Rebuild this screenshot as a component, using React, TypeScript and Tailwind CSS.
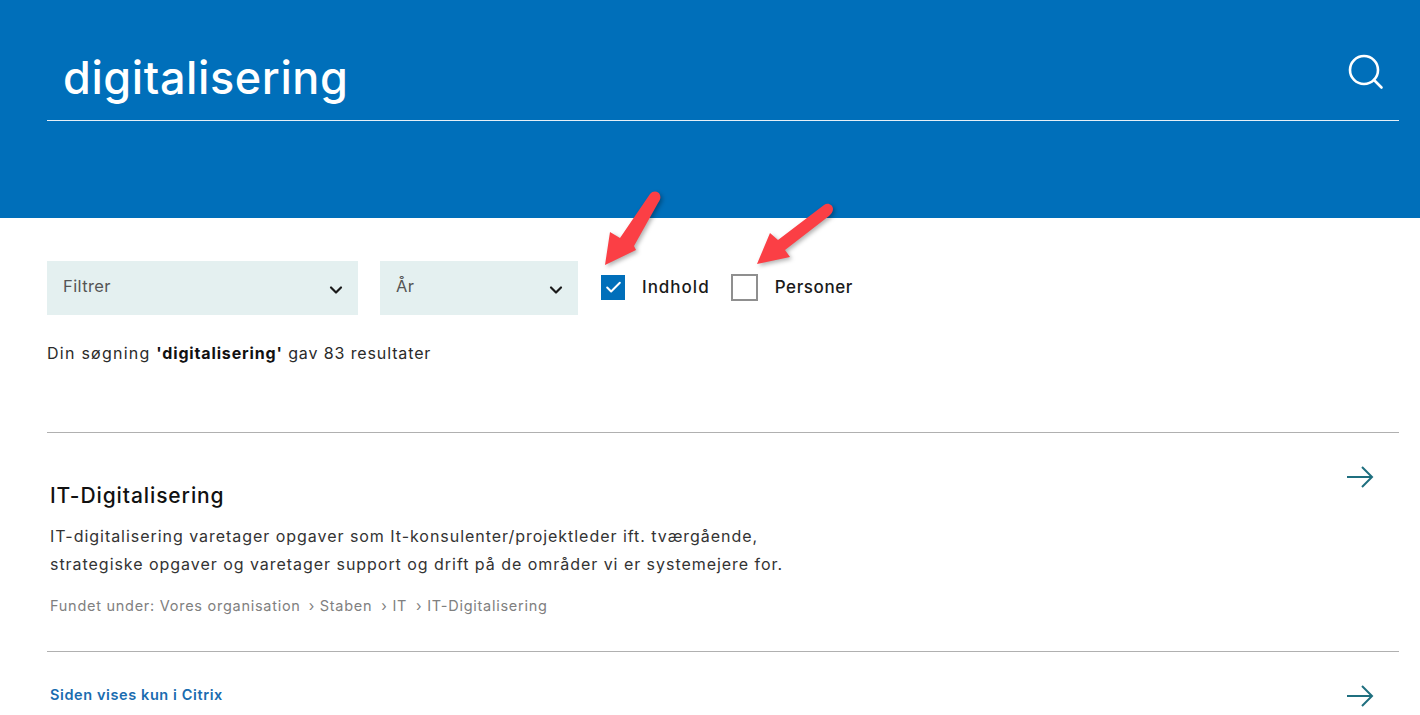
import { Check, ChevronDown } from "lucide-react";

const fontStack = "font-['Inter','Noto_Sans',sans-serif]";

function SearchIcon() {
  return (
    <svg width="38" height="38" viewBox="0 0 38 38" fill="none" stroke="#fff" strokeWidth="2.6" strokeLinecap="round">
      <circle cx="17" cy="17" r="14" />
      <path d="M27 27l7.5 7.5" />
    </svg>
  );
}

function ArrowIcon() {
  return (
    <svg width="28" height="22" viewBox="0 0 28 22" fill="none" stroke="#1f6f7f" strokeWidth="2">
      <path d="M1 11h25" />
      <path d="M16 1l10 10-10 10" />
    </svg>
  );
}

function RedArrow({ className, d }: { className: string; d: string }) {
  return (
    <svg
      className={`drop-shadow-[2px_2px_2px_rgba(0,0,0,0.3)] ${className}`}
      width="90"
      height="90"
      viewBox="0 0 90 90"
      fill="none"
    >
      <path d={d} fill="#fb3f45" />
    </svg>
  );
}

function Select({ label, width }: { label: string; width: string }) {
  return (
    <div className={`flex h-[54px] items-center justify-between bg-[#e4f0f0] pl-4 pr-[12px] ${width}`}>
      <span className="-mt-[3px] text-[16.5px] tracking-[0.4px] text-[#555]">{label}</span>
      <ChevronDown className="mt-[3px] h-[20px] w-[20px] text-[#1a1a1a]" strokeWidth={2.6} />
    </div>
  );
}

export default function App() {
  return (
    <div className={`relative h-[715px] overflow-hidden bg-white text-[#1a1a1a] ${fontStack}`}>
      {/* Search header */}
      <header className="h-[218px] bg-[#006fba] pl-[47px] pr-[21px] pt-[46px]">
        <div className="flex h-[75px] items-start justify-between border-b border-[#e6f0f8] pl-4 pr-[14px]">
          <span className="mt-[1px] text-[45px] leading-[62px] font-medium tracking-[0.6px] text-white">digitalisering</span>
          <div className="mt-[7px]">
            <SearchIcon />
          </div>
        </div>
      </header>

      <main className="pl-[47px] pr-[21px]">
        {/* Filters */}
        <div className="flex items-center pt-[43px]">
          <Select label="Filtrer" width="w-[311px]" />
          <div className="w-[22px]" />
          <Select label="År" width="w-[198px]" />
          <div className="ml-[23px] mb-[1px] flex h-[25px] w-[24px] items-center justify-center bg-[#006fba]">
            <Check className="h-[19px] w-[19px] text-white" strokeWidth={2.5} />
          </div>
          <span className="ml-[17px] text-[17px] font-medium tracking-[1px]">Indhold</span>
          <div className="ml-[21px] mb-[2px] h-[27px] w-[27px] border-2 border-[#8f8f8f] bg-white" />
          <span className="ml-[17px] text-[17px] font-medium tracking-[0.6px]">Personer</span>
        </div>

        <p className="mt-[26px] text-[16px] leading-[24px] tracking-[0.88px] text-[#2a2a2a]">
          <span className="tracking-[1.25px]">Din søgning </span>
          <strong className="font-bold tracking-[0.85px] text-[#111]">'digitalisering'</strong> gav 83 resultater
        </p>

        {/* Results */}
        <section className="mt-[67px] border-t border-[#b0b0b0]">
          <div className="flex h-[219px] justify-between border-b border-[#b0b0b0] pl-[3px] pr-[25px]">
            <div className="pt-[47px]">
              <h2 className="text-[21px] leading-[32px] font-medium tracking-[0.9px] text-[#111]">IT-Digitalisering</h2>
              <p className="mt-[10px] text-[16px] leading-[28px] tracking-[0.96px] text-[#333]">
                IT-digitalisering varetager opgaver som It-konsulenter/projektleder ift. tværgående,
                <br />
                strategiske opgaver og varetager support og drift på de områder vi er systemejere for.
              </p>
              <p className="mt-[16px] flex text-[14.5px] leading-[24px] tracking-[0.73px] text-[#808080]">
                <span>Fundet under: Vores organisation</span>
                <span className="ml-[8px]">› Staben</span>
                <span className="ml-[9px]">› IT</span>
                <span className="ml-[9px]">› IT-Digitalisering</span>
              </p>
            </div>
            <div className="pt-[33px]">
              <ArrowIcon />
            </div>
          </div>
          <div className="flex justify-between pl-[3px] pr-[25px]">
            <a className="pt-[31px] text-[14.5px] leading-[24px] font-semibold tracking-[0.6px] text-[#1a6cb0]">
              Siden vises kun i Citrix
            </a>
            <div className="pt-[33px]">
              <ArrowIcon />
            </div>
          </div>
        </section>
      </main>

      {/* Annotation arrows */}
      <RedArrow
        className="absolute left-[590px] top-[180px]"
        d="M15 85L20 52L30 58L60 14C63 10 69 11 70 15C71 18 70 20 68 23L44 66L46 70Z"
      />
      <RedArrow
        className="absolute left-[746px] top-[190px]"
        d="M11 74L24 43L32 50L78 15C82 12 87 15 87 19C87 22 85 24 83 26L39 60L44 67Z"
      />
    </div>
  );
}
